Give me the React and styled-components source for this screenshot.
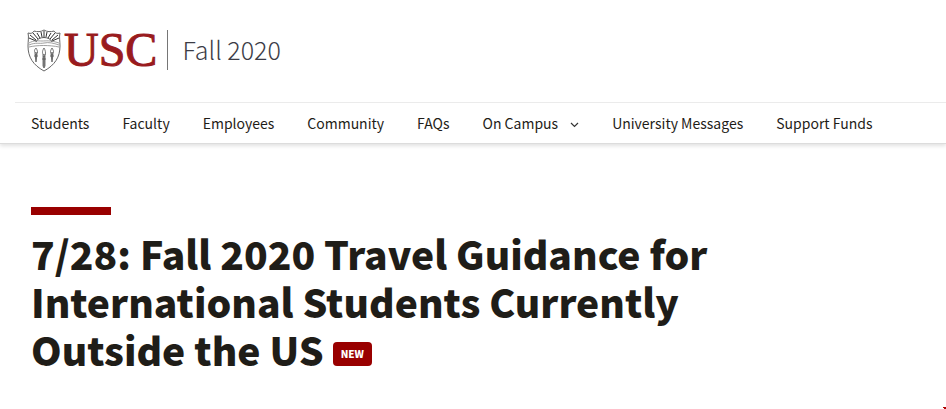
import styled, { createGlobalStyle } from "styled-components";

const links = [
  { label: "Students" },
  { label: "Faculty" },
  { label: "Employees" },
  { label: "Community" },
  { label: "FAQs" },
  { label: "On Campus", hasMenu: true },
  { label: "University Messages" },
  { label: "Support Funds" },
];

const Shield = () => (
  <svg width="34" height="43" viewBox="0 0 34 43" fill="none" aria-hidden="true">
    <path
      d="M1 4C4 5 6 4 7 2C10 3 14 3 17 1C20 3 24 3 27 2C28 4 30 5 33 4C32 8 33 12 33 17C33 28 28 36 17 42C6 36 1 28 1 17C1 12 2 8 1 4Z"
      stroke="#666"
      fill="#fff"
    />
    <path
      d="M9 12L2 9M9 11L3 6M11 10L6 4M13 9L10 4M15 8L14 3M17 8V2M19 8L20 3M21 9L24 4M23 10L28 4M25 11L31 6M25 12L32 9"
      stroke="#333"
    />
    <path d="M9 13C11 7 23 7 25 13" stroke="#555" fill="#fff" />
    <path
      d="M2 14C7 11 11 12 15 12S23 11 32 14M2 16C9 13 12 15 17 14S26 14 32 16M2 18C10 16 23 16 32 18"
      stroke="#888"
      strokeWidth="0.8"
    />
    <g stroke="#555" strokeWidth="0.8">
      <path d="M8 25H10L9 33ZM16 27H18V37L17 39L16 37ZM24 25H26L25 33Z" fill="#888" />
      <path d="M7 24H11M15 26H19M23 24H27M7 27H11M15 30H19M23 27H27" />
      <path d="M9 19C7 21 7 23 9 24S11 22 9 19ZM17 19C15 22 15 25 17 26S19 22 17 19ZM25 19C23 22 23 24 25 24S27 22 25 19Z" />
    </g>
  </svg>
);

const Header = () => (
  <PageHeader>
    <Brand>
      <LogoLink href="#" aria-label="USC">
        <Shield />
        <Wordmark>USC</Wordmark>
      </LogoLink>
      <SiteName href="#">Fall 2020</SiteName>
    </Brand>
    <Nav aria-label="Main">
      {links.map(({ label, hasMenu }) => (
        <NavLink href="#" key={label}>
          {label}
          {hasMenu && (
            <Chevron width="9" height="6" viewBox="0 0 9 6" fill="none" aria-hidden="true">
              <path d="M1 1L4.5 4.5L8 1" stroke="#333" strokeWidth="1.2" />
            </Chevron>
          )}
        </NavLink>
      ))}
    </Nav>
  </PageHeader>
);

const App = () => {
  return (
    <>
      <GlobalStyle />
      <Header />
      <Article>
        <Accent />
        <Title>
          7/28: Fall 2020 Travel Guidance for International Students Currently
          Outside the US <Badge>NEW</Badge>
        </Title>
      </Article>
      <Corner width="3" height="2" viewBox="0 0 3 2" aria-hidden="true">
        <path d="M0 0H3V2H1V1H0Z" fill="#b00000" />
      </Corner>
    </>
  );
};

export default App;

const GlobalStyle = createGlobalStyle`
  * {
    box-sizing: border-box;
  }

  body {
    margin: 0;
    background: #fff;
    color: #1f1d18;
    font-family: "Noto Sans CJK SC", "Noto Sans", sans-serif;
  }

  a {
    color: inherit;
    text-decoration: none;
  }
`;

const PageHeader = styled.header`
  border-bottom: 1px solid #dcdcdc;
  box-shadow: 0 2px 4px rgba(0, 0, 0, 0.12);
`;

const Brand = styled.div`
  display: flex;
  align-items: center;
  height: 102px;
  padding: 0 27px 2px;
`;

const LogoLink = styled.a`
  display: flex;
  align-items: center;
  gap: 3px;
`;

const Wordmark = styled.span`
  color: #991b1e;
  font-family: "Liberation Serif", serif;
  font-size: 48px;
  line-height: 40px;
  -webkit-text-stroke: 1px #991b1e;
`;

const SiteName = styled.a`
  margin-left: 10px;
  padding: 0 0 2px 14px;
  border-left: 1px solid #767676;
  color: #3c3c46;
  font-size: 25px;
  font-weight: 300;
  line-height: 38px;
`;

const Nav = styled.nav`
  display: flex;
  gap: 33px;
  margin-left: 15px;
  padding: 0 16px;
  border-top: 1px solid #ebebeb;
`;

const NavLink = styled.a`
  display: flex;
  align-items: center;
  gap: 12px;
  font-size: 14px;
  line-height: 40px;
  white-space: nowrap;

  &:hover {
    color: #990000;
  }
`;

const Chevron = styled.svg`
  margin-top: 4px;
`;

const Article = styled.main`
  max-width: 760px;
  padding: 63px 31px 32px;
`;

const Accent = styled.div`
  width: 80px;
  height: 8px;
  background: #990000;
`;

const Title = styled.h1`
  margin: 14px 0 0;
  font-size: 39px;
  font-weight: 900;
  line-height: 48px;
`;

const Badge = styled.span`
  display: inline-block;
  padding: 0 8px;
  border-radius: 4px;
  background: #990000;
  color: #fff;
  font-size: 10px;
  line-height: 24px;
  vertical-align: 8px;
`;

const Corner = styled.svg`
  position: fixed;
  right: 0;
  bottom: 0;
`;
